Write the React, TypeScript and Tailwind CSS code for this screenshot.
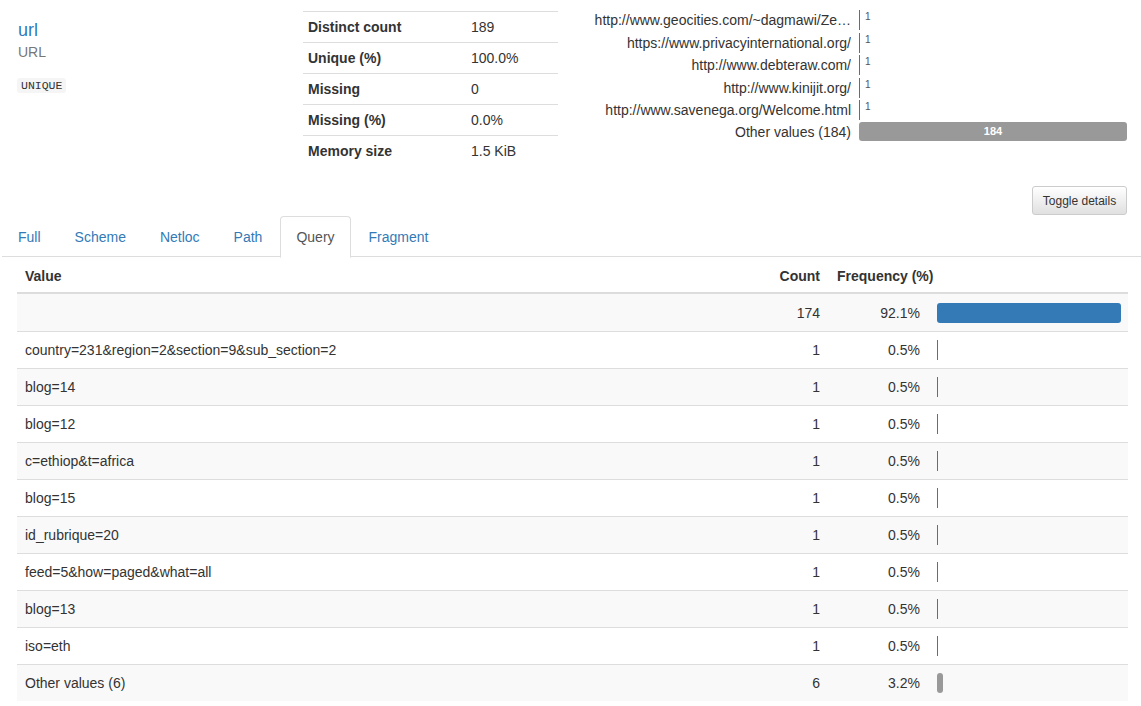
import React from "react";

const stats: [string, string][] = [
  ["Distinct count", "189"],
  ["Unique (%)", "100.0%"],
  ["Missing", "0"],
  ["Missing (%)", "0.0%"],
  ["Memory size", "1.5 KiB"],
];

const mini: string[] = [
  "http://www.geocities.com/~dagmawi/Ze…",
  "https://www.privacyinternational.org/",
  "http://www.debteraw.com/",
  "http://www.kinijit.org/",
  "http://www.savenega.org/Welcome.html",
];

type Row = { v: string; c: number; f: string; other?: boolean };
const rows: Row[] = [
  { v: "", c: 174, f: "92.1%" },
  { v: "country=231&region=2&section=9&sub_section=2", c: 1, f: "0.5%" },
  { v: "blog=14", c: 1, f: "0.5%" },
  { v: "blog=12", c: 1, f: "0.5%" },
  { v: "c=ethiop&t=africa", c: 1, f: "0.5%" },
  { v: "blog=15", c: 1, f: "0.5%" },
  { v: "id_rubrique=20", c: 1, f: "0.5%" },
  { v: "feed=5&how=paged&what=all", c: 1, f: "0.5%" },
  { v: "blog=13", c: 1, f: "0.5%" },
  { v: "iso=eth", c: 1, f: "0.5%" },
  { v: "Other values (6)", c: 6, f: "3.2%", other: true },
];

const tabs = ["Full", "Scheme", "Netloc", "Path", "Query", "Fragment"];

export default function App() {
  return (
    <div
      className="w-[1141px] h-[706px] overflow-hidden bg-white text-[14px] leading-[20px] text-[#333]"
      style={{ fontFamily: '"Liberation Sans", Arial, sans-serif' }}
    >
      {/* top section */}
      <div className="flex h-[186px]">
        <div className="w-[303px] pl-[18px] pt-[20px]">
          <div className="text-[18px] leading-[20px] text-[#337ab7]">url</div>
          <div className="mt-[2px] text-[14px] leading-[20px] text-[#777]">URL</div>
          <div className="mt-[12px]">
            <span
              className="inline-block bg-[#f5f5f5] text-[#333] text-[11.5px] leading-[15px] px-[4px] rounded-[3px] ml-[-1px]"
              style={{ fontFamily: '"Liberation Mono", "DejaVu Sans Mono", monospace' }}
            >
              UNIQUE
            </span>
          </div>
        </div>
        <div className="w-[255px] mt-[11px]">
          {stats.map(([k, v]) => (
            <div key={k} className="flex border-t border-[#ddd] h-[31px] items-center">
              <div className="w-[163px] pl-[5px] font-bold">{k}</div>
              <div className="pl-[5px]">{v}</div>
            </div>
          ))}
        </div>
        <div className="ml-[22px] mt-[9px]">
          {mini.map((m) => (
            <div key={m} className="flex h-[22.5px]">
              <div className="w-[271px] text-right whitespace-nowrap overflow-hidden leading-[22px]">{m}</div>
              <div className="ml-[8px] flex items-start pt-[1px]">
                <div className="w-[1px] h-[20px] bg-[#337ab7]" />
                <span className="ml-[5px] text-[10px] leading-[14px] text-[#555]">1</span>
              </div>
            </div>
          ))}
          <div className="flex h-[20px]">
            <div className="w-[271px] text-right whitespace-nowrap leading-[20px]">Other values (184)</div>
            <div className="ml-[8px]">
              <div className="w-[268px] h-[19px] bg-[#999] rounded-[3px] text-white font-bold text-[11px] leading-[19px] text-center">
                184
              </div>
            </div>
          </div>
        </div>
      </div>

      {/* toggle */}
      <div className="flex justify-end pr-[14px] h-[30px]">
        <button className="h-[29px] w-[95px] border border-[#ccc] rounded-[3px] bg-linear-to-b from-white to-[#e0e0e0] text-[12px] text-[#333] leading-[18px]">
          Toggle details
        </button>
      </div>

      {/* tabs */}
      <div className="ml-[2px] flex border-b border-[#ddd] h-[41px]">
        {tabs.map((t) => {
          const active = t === "Query";
          return (
            <div
              key={t}
              className={
                active
                  ? "mr-[2px] px-[15px] pt-[10px] h-[42px] border border-[#ddd] border-b-white rounded-t-[4px] bg-white text-[#555]"
                  : "mr-[2px] px-[15px] pt-[10px] h-[41px] border border-transparent text-[#337ab7]"
              }
            >
              {t}
            </div>
          );
        })}
      </div>

      {/* freq table */}
      <div className="ml-[17px] w-[1111px]">
        <div className="flex h-[37px] items-end pb-[6px] border-b-2 border-[#ddd] font-bold">
          <div className="w-[754px] pl-[8px]">Value</div>
          <div className="w-[57px] text-right pr-[8px]">Count</div>
          <div className="pl-[9px] whitespace-nowrap">Frequency (%)</div>
        </div>
        {rows.map((r, i) => {
          const w = r.other ? 6 : Math.max(1, Math.round((r.c / 174) * 184));
          return (
            <div
              key={i}
              className={
                "flex h-[37px] items-center border-[#ddd] " +
                (i > 0 ? "border-t " : "") +
                (i % 2 === 0 ? "bg-[#f9f9f9]" : "bg-white")
              }
            >
              <div className="w-[754px] pl-[8px] whitespace-nowrap">{r.v}</div>
              <div className="w-[57px] text-right pr-[8px]">{r.c}</div>
              <div className="w-[109px] text-right pr-[17px]">{r.f}</div>
              <div className="flex-1">
                <div
                  className={
                    "h-[20px] " +
                    (r.other ? "bg-[#999] rounded-[3px]" : r.c > 1 ? "bg-[#337ab7] rounded-[3px]" : "bg-[#337ab7]")
                  }
                  style={{ width: w }}
                />
              </div>
            </div>
          );
        })}
      </div>
    </div>
  );
}
